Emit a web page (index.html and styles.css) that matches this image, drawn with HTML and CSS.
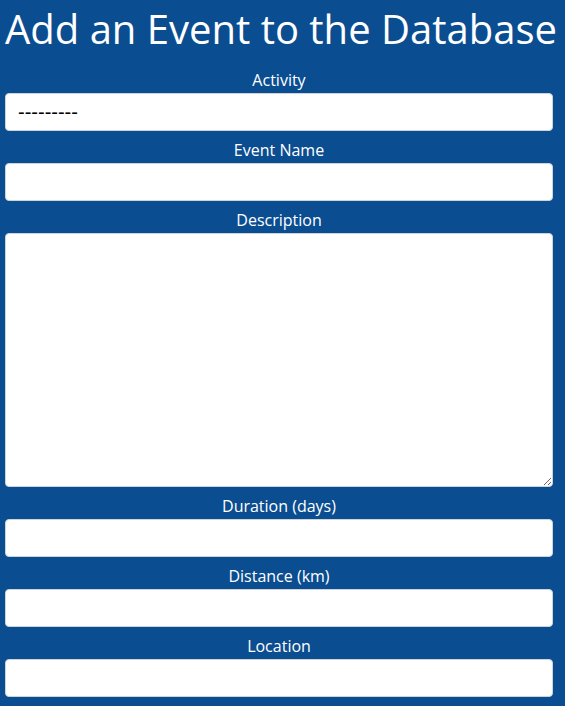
FILE: index.html
```html
<!DOCTYPE html>
<html lang="en">
<head>
    <meta charset="UTF-8">
    <meta name="viewport" content="width=device-width, initial-scale=1.0">
    <title>Add an Event</title>
    <link rel="stylesheet" href="styles.css">
</head>
<body>
    <div class="container">
        <h1>Add an Event to the Database</h1>
        <form id="eventForm">
            <label for="activity">Activity</label>
            <select id="activity">
                <option value="">---------</option>
            </select>
            <label for="name">Event Name</label>
            <input type="text" id="name">
            <label for="description">Description</label>
            <textarea id="description"></textarea>
            <label for="duration">Duration (days)</label>
            <input type="number" id="duration">
            <label for="distance">Distance (km)</label>
            <input type="number" id="distance">
            <label for="location">Location</label>
            <input type="text" id="location">
        </form>
    </div>
</body>
</html>
```

FILE: styles.css
```css
body {
    font-family: "Open Sans", Arial, sans-serif;
    margin: 0;
    padding: 0;
    background-color: #0b4d91;
    color: #fff;
}

.container {
    width: 548px;
    padding: 0 12px 0 5px;
    text-align: center;
}

h1 {
    font-size: 40px;
    font-weight: 400;
    line-height: 58px;
    margin: 0 0 10px 0;
    white-space: nowrap;
}

label {
    display: block;
    font-size: 16px;
    line-height: 24px;
    margin-bottom: 1px;
}

input,
select,
textarea {
    display: block;
    box-sizing: border-box;
    width: 100%;
    height: 38px;
    margin: 0 0 7px 0;
    padding: 6px 12px;
    border: 1px solid #ced4da;
    border-radius: 4px;
    background-color: #fff;
    font-family: "Liberation Sans", Arial, sans-serif;
    font-size: 16px;
    color: #000;
}

select {
    appearance: none;
    -webkit-appearance: none;
    font-size: 20px;
}

textarea {
    height: 254px;
    resize: both;
}
```
